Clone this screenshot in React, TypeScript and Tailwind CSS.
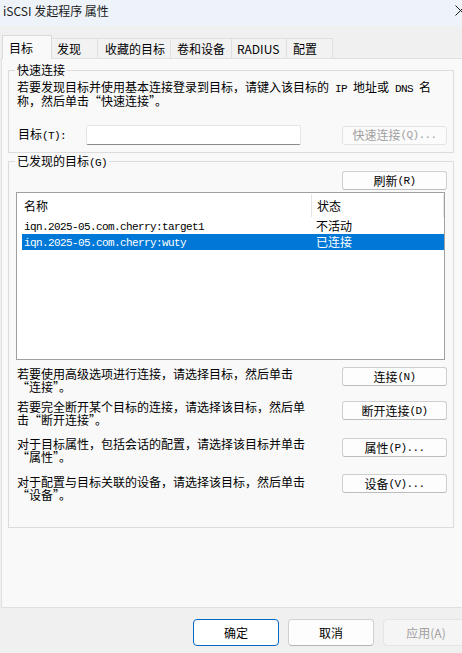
import React from "react";

// SimSun-style text: half-width latin runs get a narrow mono face (6px per char)
function sim(text: string) {
  return text.split(/([\x20-\x7e]+)/).map((part, i) =>
    /^[\x20-\x7e]+$/.test(part) ? (
      <span
        key={i}
        className="whitespace-pre font-['Liberation_Mono',monospace] text-[11px] tracking-[-0.6px]"
      >
        {part}
      </span>
    ) : (
      <React.Fragment key={i}>{part}</React.Fragment>
    )
  );
}

function Group({
  title,
  className = "",
  children,
}: {
  title: string;
  className?: string;
  children: React.ReactNode;
}) {
  return (
    <div className={`relative w-[446px] border border-[#dcdcdc] ${className}`}>
      <span className="absolute -top-[8px] left-[6px] bg-[#f9f9f9] px-[2px] leading-[14px]">
        {sim(title)}
      </span>
      {children}
    </div>
  );
}

function SmallButton({
  label,
  disabled = false,
  className = "",
}: {
  label: string;
  disabled?: boolean;
  className?: string;
}) {
  return (
    <button
      className={`flex h-[19px] w-[105px] shrink-0 items-center justify-center rounded-[3px] border leading-[12px] ${
        disabled
          ? "border-[#e3e3e3] bg-[#fbfbfb] text-[#a0a0a0]"
          : "border-[#cfcfcf] border-b-[#bdbdbd] bg-[#fdfdfd] text-black"
      } ${className}`}
    >
      {sim(label)}
    </button>
  );
}

const tabs = [
  { label: "发现", w: "w-[46px]", pl: "pl-[5px]" },
  { label: "收藏的目标", w: "w-[73px]", pl: "pl-[7px]" },
  { label: "卷和设备", w: "w-[61px]", pl: "pl-[6px]" },
  { label: "RADIUS", w: "w-[55px]", pl: "pl-[5px]" },
  { label: "配置", w: "w-[46px]", pl: "pl-[6px]" },
];

const targets = [
  { name: "iqn.2025-05.com.cherry:target1", status: "不活动", selected: false },
  { name: "iqn.2025-05.com.cherry:wuty", status: "已连接", selected: true },
];

const actions = [
  {
    lines: ["若要使用高级选项进行连接，请选择目标，然后单击", "“连接”。"],
    label: "连接(N)",
    gap: "mt-[7px]",
    btn: "",
  },
  {
    lines: ["若要完全断开某个目标的连接，请选择该目标，然后单", "击“断开连接”。"],
    label: "断开连接(D)",
    gap: "mt-[7px]",
    btn: "mt-[1px]",
  },
  {
    lines: ["对于目标属性，包括会话的配置，请选择该目标并单击", "“属性”。"],
    label: "属性(P)...",
    gap: "mt-[11px]",
    btn: "mt-[1px]",
  },
  {
    lines: ["对于配置与目标关联的设备，请选择该目标，然后单击", "“设备”。"],
    label: "设备(V)...",
    gap: "mt-[12px]",
    btn: "-mt-[1px]",
  },
];

export default function App() {
  return (
    <div className="h-[653px] w-[462px] overflow-hidden bg-[#f0f0f0] font-['Noto_Sans_CJK_SC',sans-serif] text-[12px] text-black">
      {/* title bar */}
      <div className="flex h-[26px] items-start bg-[#eef3f9] pl-[3px] pt-[3px]">
        <span className="leading-[16px] text-[#1a1a1a]">iSCSI 发起程序 属性</span>
        <svg
          className="-mr-[4px] ml-auto mt-[2px] shrink-0"
          width="11"
          height="11"
          viewBox="0 0 11 11"
        >
          <path d="M0.5 0.5 L10.5 10.5 M10.5 0.5 L0.5 10.5" stroke="#1a1a1a" strokeWidth="1" />
        </svg>
      </div>

      {/* tabs */}
      <div className="flex h-[32px] items-end pl-[2px]">
        <div className="relative z-10 -mb-px flex h-[24px] w-[50px] items-center border border-b-0 border-[#dadada] bg-[#f9f9f9] pl-[6px]">
          目标
        </div>
        {tabs.map((t) => (
          <div
            key={t.label}
            className={`flex h-[20px] items-center border-r border-t border-[#e0e0e0] bg-[#f2f2f2] ${t.w} ${t.pl}`}
          >
            {t.label}
          </div>
        ))}
      </div>

      {/* page */}
      <div className="relative ml-[1px] h-[550px] border-y border-l border-[#e0e0e0] bg-[#f9f9f9] pl-[6px] pt-[11px]">
        <Group title="快速连接">
          <div className="pl-[8px] pt-[10px] leading-[12px]">
            {sim("若要发现目标并使用基本连接登录到目标，请键入该目标的 IP 地址或 DNS 名")}
            <br />
            {sim("称，然后单击“快速连接”。")}
          </div>
          <div className="mt-[18px] flex items-center pb-[7px]">
            <span className="w-[77px] shrink-0 pl-[9px]">{sim("目标(T):")}</span>
            <div className="h-[20px] w-[215px] shrink-0 rounded-[2px] border border-[#e5e5e5] border-b-[#8a8a8a] bg-white" />
            <SmallButton label="快速连接(Q)..." disabled className="ml-[41px]" />
          </div>
        </Group>

        <Group title="已发现的目标(G)" className="mt-[8px] h-[367px]">
          <div className="flex justify-end pr-[6px] pt-[9px]">
            <SmallButton label="刷新(R)" />
          </div>

          <div className="ml-[7px] mt-[2px] h-[168px] w-[429px] border border-[#a0a0a0] bg-white">
            <div className="flex h-[25px] items-center">
              <div className="flex h-[23px] w-[295px] shrink-0 items-center border-r border-[#e5e5e5] pl-[7px]">
                名称
              </div>
              <div className="flex h-[23px] w-[132px] shrink-0 items-center border-r border-[#e5e5e5] pl-[5px]">
                状态
              </div>
            </div>
            {targets.map((t) => (
              <div
                key={t.name}
                className={`ml-[5px] flex h-[16px] w-[422px] items-center ${
                  t.selected ? "bg-[#0078d7] text-white" : ""
                }`}
              >
                <div className="w-[290px] shrink-0 pl-[2px] leading-[12px]">{sim(t.name)}</div>
                <div className="pl-[4px] leading-[12px]">{t.status}</div>
              </div>
            ))}
          </div>

          {actions.map((a) => (
            <div key={a.label} className={`flex items-start ${a.gap}`}>
              <div className="w-[325px] shrink-0 pl-[8px] leading-[13px]">
                {a.lines[0]}
                <br />
                {a.lines[1]}
              </div>
              <SmallButton label={a.label} className={`ml-[8px] ${a.btn}`} />
            </div>
          ))}
        </Group>
      </div>

      {/* dialog buttons */}
      <div className="flex gap-[9px] pl-[193px] pt-[11px]">
        <button className="flex h-[27px] w-[86px] shrink-0 items-center justify-center rounded-[4px] border border-[#0067c0] bg-white text-black">
          确定
        </button>
        <button className="flex h-[27px] w-[86px] shrink-0 items-center justify-center rounded-[4px] border border-[#d0d0d0] border-b-[#b5b5b5] bg-[#fdfdfd] text-black">
          取消
        </button>
        <button className="flex h-[27px] w-[86px] shrink-0 items-center justify-center rounded-[4px] border border-[#e5e5e5] bg-[#f5f5f5] text-[#a0a0a0]">
          应用(A)
        </button>
      </div>
    </div>
  );
}
